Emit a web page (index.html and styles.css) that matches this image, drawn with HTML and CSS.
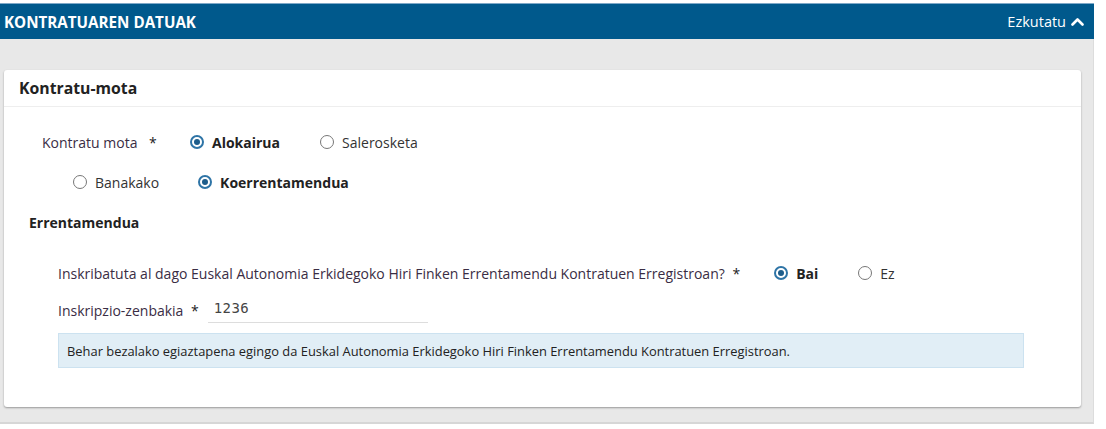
FILE: index.html
```html
<!DOCTYPE html>
<html lang="eu">
<head>
<meta charset="utf-8">
<link rel="stylesheet" href="styles.css">
</head>
<body>
<div class="section">
  <div class="section-head">
    <span class="section-title">KONTRATUAREN DATUAK</span>
    <span class="toggle">Ezkutatu
      <svg class="chev" width="13" height="9" viewBox="0 0 13 9"><path d="M1.5 7.5 L6.5 2.5 L11.5 7.5" fill="none" stroke="#fff" stroke-width="2.6" stroke-linecap="round" stroke-linejoin="round"/></svg>
    </span>
  </div>
  <div class="section-body">
    <div class="card">
      <div class="card-head">Kontratu-mota</div>
      <div class="card-body">
        <div class="row row-type">
          <span class="label">Kontratu mota <span class="req">*</span></span>
          <label class="radio checked"><span class="dot"></span><b>Alokairua</b></label>
          <label class="radio"><span class="dot"></span>Salerosketa</label>
        </div>
        <div class="row row-sub">
          <label class="radio"><span class="dot"></span>Banakako</label>
          <label class="radio checked"><span class="dot"></span><b>Koerrentamendua</b></label>
        </div>
        <div class="subtitle">Errentamendua</div>
        <div class="row row-q">
          <span class="label">Inskribatuta al dago Euskal Autonomia Erkidegoko Hiri Finken Errentamendu Kontratuen Erregistroan? <span class="req">*</span></span>
          <label class="radio checked"><span class="dot"></span><b>Bai</b></label>
          <label class="radio"><span class="dot"></span>Ez</label>
        </div>
        <div class="row row-num">
          <span class="label">Inskripzio-zenbakia <span class="req">*</span></span>
          <span class="input">1236</span>
        </div>
        <div class="info">Behar bezalako egiaztapena egingo da Euskal Autonomia Erkidegoko Hiri Finken Errentamendu Kontratuen Erregistroan.</div>
      </div>
    </div>
  </div>
</div>
</body>
</html>
```
FILE: styles.css
```css
* { box-sizing: border-box; }
body {
  margin: 0;
  padding-top: 3px;
  background: #fff;
  font-family: "Open Sans", "Noto Sans", sans-serif;
  color: #333;
}
.section { width: 1094px; }
.section-head {
  height: 36px;
  background: #00598c;
  border-top: 1px solid #7ea9c8;
  display: flex;
  align-items: center;
  justify-content: space-between;
  padding: 0 10px 0 4px;
  color: #fff;
}
.section-title { font-weight: 700; font-size: 15.2px; letter-spacing: 0; }
.toggle { font-size: 14.5px; display: flex; align-items: center; gap: 5px; }
.chev { display: block; }
.section-body {
  background: #e8e8e8;
  padding: 31px 12px 15px 4px;
  border-right: 1px solid #dcdcdc;
  border-bottom: 2px solid #d6d6d6;
}
.card {
  background: #fff;
  border-radius: 3px;
  box-shadow: 0 1px 2px rgba(0,0,0,0.35);
}
.card-head {
  height: 37px;
  display: flex;
  align-items: center;
  padding-left: 15px;
  font-weight: 700;
  font-size: 15.8px;
  color: #222;
  border-bottom: 1px solid #eee;
}
.card-body { padding: 24px 0 39px 0; font-size: 14px; }
.row { display: flex; align-items: center; height: 22px; }
.label { color: #3a2d44; }
.req { color: #222; margin-left: 4px; }
.radio { display: flex; align-items: center; gap: 8px; color: #333; }
.radio b { color: #222; }
.dot {
  width: 14px; height: 14px;
  border-radius: 50%;
  border: 1px solid #777;
  background: #fff;
  display: inline-block;
  position: relative;
  flex: none;
}
.checked .dot { border: 2px solid #2e74a6; }
.checked .dot::after {
  content: "";
  position: absolute;
  left: 2px; top: 2px;
  width: 6px; height: 6px;
  border-radius: 50%;
  background: #1d5d8b;
}
.row-type { padding-left: 38px; }
.row-type .label { width: 148px; }
.row-type .req { margin-left: 8px; }
.row-type .radio:nth-of-type(2) { margin-left: 40px; }
.row-sub { padding-left: 69px; margin-top: 18px; }
.row-sub .radio:nth-of-type(2) { margin-left: 39px; }
.subtitle { font-weight: 700; padding-left: 25px; margin-top: 20px; line-height: 20px; color: #222; }
.row-q { padding-left: 54px; margin-top: 29px; }
.row-q .radio:nth-of-type(1) { margin-left: 34px; }
.row-q .radio:nth-of-type(2) { margin-left: 40px; }
.row-num { padding-left: 54px; margin-top: 13px; height: 26px; }
.input {
  margin-left: 9px;
  width: 220px;
  height: 26px;
  border-bottom: 1px solid #ddd;
  padding: 3px 0 0 6px;
  font-family: "DejaVu Sans Mono", monospace;
  font-size: 14px;
  letter-spacing: 0.4px;
  color: #444;
}
.info {
  margin: 10px 0 0 54px;
  width: 966px;
  height: 35px;
  background: #e1eef6;
  border: 1px solid #cce2f0;
  display: flex;
  align-items: center;
  padding-left: 8px;
  font-size: 12.9px;
  color: #222;
}
```
